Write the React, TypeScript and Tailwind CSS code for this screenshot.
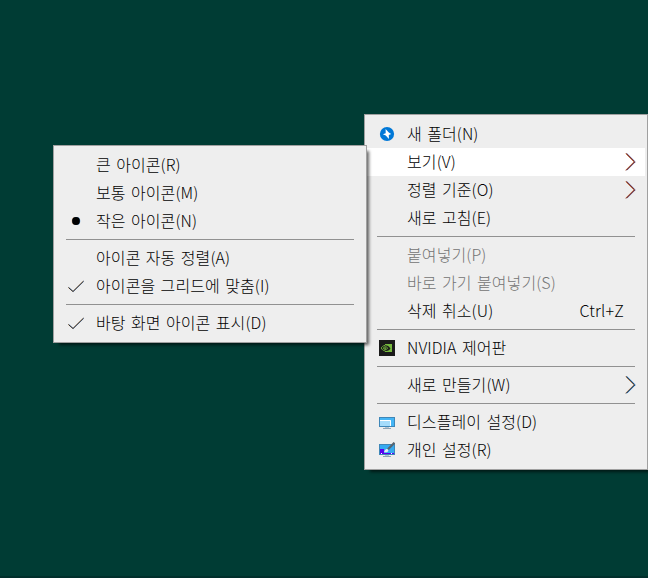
import React from "react";
import clsx from "clsx";

type MenuEntry =
  | { type: "separator" }
  | {
      type: "item";
      label: string;
      icon?: React.ReactNode;
      shortcut?: string;
      arrow?: "red" | "blue";
      active?: boolean;
      disabled?: boolean;
    };

const FolderIcon = () => (
  <svg width="16" height="16" viewBox="0 0 16 16">
    <circle cx="8" cy="8" r="7.1" fill="#0078d7" />
    <path d="M6.6 3 L9.8 6.4 L12.2 8 L9.8 9 L9.9 13 L6.8 9.4 L3.9 8.2 L6.7 7.2 Z" fill="#fff" />
  </svg>
);

const NvidiaIcon = () => (
  <svg width="16" height="16" viewBox="0 0 16 16">
    <rect width="16" height="16" fill="#1a1a1a" />
    <path d="M6 4h7v8H6v-1.2c3 .5 4.6-1 5.4-2.4C10 6.4 8.5 5.4 6 5.3Z" fill="#76b93e" />
    <path
      d="M6 5.4C4 5.7 2.6 7 2.2 8c.7 1.6 2 2.6 3.8 2.9M6 6.9c-1 .2-1.6.7-1.9 1.2.4.7 1 1.1 1.9 1.3M6 6.8c1.5-.1 2.2.6 2.8 1.3C8.2 9 7.3 9.6 6 9.4V7.8l1.2.7"
      fill="none"
      stroke="#76b93e"
      strokeWidth="0.9"
    />
  </svg>
);

const DisplayIcon = () => (
  <svg width="16" height="16" viewBox="0 0 16 16">
    <rect x="0.5" y="3.5" width="15" height="9" fill="#45b5f5" stroke="#3f87b8" />
    <path d="M1 6h11v6H1z" fill="#a5dcfb" />
    <path d="M1 6.500h10.500V12" fill="none" stroke="#fff" />
    <path d="M6 13h4v1H6z" fill="#b5c4cf" />
    <path d="M4 14h8v1H4z" fill="#8fa5b5" />
  </svg>
);

const PersonalizeIcon = () => (
  <svg width="16" height="16" viewBox="0 0 16 16">
    <rect x="0.5" y="2.5" width="15" height="10" fill="#35aaf0" stroke="#3f87b8" />
    <path d="M1 7h4v4h10v1H1z" fill="#5a00f0" />
    <path d="M2 11h1v1H2zM12 11h1v1h-1z" fill="#fff" />
    <path d="M6 13h4v1H6z" fill="#b5c4cf" />
    <path d="M4 14h8v1H4z" fill="#8fa5b5" />
    <path d="M9 7.200 L15.500 0.700" stroke="#59656f" strokeWidth="2.2" />
    <path d="M4.800 10c1-.3.800-2.500 2.500-3 1.500-.2 2.500 1 1.800 2.200C8.300 10.500 6.300 10.500 4.800 10Z" fill="#e9edf0" />
  </svg>
);

const CheckIcon = () => (
  <svg width="16" height="16" viewBox="0 0 16 16" fill="none">
    <path d="M0.200 9.500 L4.800 13.600 L15.200 3.200" stroke="#e9b27c" strokeWidth="0.9" />
    <path d="M0.900 9.500 L5.400 13.600 L16 3.200" stroke="#6a9fe0" strokeWidth="0.7" />
    <path d="M0.500 9.500 L5 13.500 L15.600 3.100" stroke="#111" strokeWidth="0.9" />
  </svg>
);

const BulletIcon = () => (
  <svg width="16" height="16" viewBox="0 0 16 16">
    <circle cx="7.7" cy="8" r="4" fill="#e9a060" />
    <circle cx="8.3" cy="8" r="4" fill="#5b9ee0" />
    <circle cx="8" cy="8" r="3.9" fill="#000" />
  </svg>
);

// subpixel-style fringes: warm on the left edge, cool on the right
const Chevron = ({ tone }: { tone: "red" | "blue" }) => (
  <svg width="11" height="18" viewBox="0 0 11 18" fill="none">
    <path d="M0.500 0.500 L8.900 8.900 L0.500 17.300" stroke="#e8a468" />
    <path d="M1.900 0.500 L10.300 8.900 L1.900 17.300" stroke={tone === "red" ? "#7d7fb0" : "#2f8be0"} />
    <path d="M1.200 0.500 L9.600 8.900 L1.200 17.300" stroke={tone === "red" ? "#5a0008" : "#001c38"} />
  </svg>
);

const desktopMenu: MenuEntry[] = [
  { type: "item", label: "새 폴더(N)", icon: <FolderIcon /> },
  { type: "item", label: "보기(V)", arrow: "red", active: true },
  { type: "item", label: "정렬 기준(O)", arrow: "red" },
  { type: "item", label: "새로 고침(E)" },
  { type: "separator" },
  { type: "item", label: "붙여넣기(P)", disabled: true },
  { type: "item", label: "바로 가기 붙여넣기(S)", disabled: true },
  { type: "item", label: "삭제 취소(U)", shortcut: "Ctrl+Z" },
  { type: "separator" },
  { type: "item", label: "NVIDIA 제어판", icon: <NvidiaIcon /> },
  { type: "separator" },
  { type: "item", label: "새로 만들기(W)", arrow: "blue" },
  { type: "separator" },
  { type: "item", label: "디스플레이 설정(D)", icon: <DisplayIcon /> },
  { type: "item", label: "개인 설정(R)", icon: <PersonalizeIcon /> },
];

const viewMenu: MenuEntry[] = [
  { type: "item", label: "큰 아이콘(R)" },
  { type: "item", label: "보통 아이콘(M)" },
  { type: "item", label: "작은 아이콘(N)", icon: <BulletIcon /> },
  { type: "separator" },
  { type: "item", label: "아이콘 자동 정렬(A)" },
  { type: "item", label: "아이콘을 그리드에 맞춤(I)", icon: <CheckIcon /> },
  { type: "separator" },
  { type: "item", label: "바탕 화면 아이콘 표시(D)", icon: <CheckIcon /> },
];

const ContextMenu = ({ entries, className }: { entries: MenuEntry[]; className?: string }) => (
  <div
    className={clsx(
      "absolute border border-[#a0a0a0] bg-[#eeeeee] px-[2px] py-[5px] shadow-[4px_4px_3px_-2px_rgba(0,0,0,0.6)]",
      className
    )}
  >
    {entries.map((entry, index) =>
      entry.type === "separator" ? (
        <div key={index} className="flex h-[9px] items-center px-[10px]">
          <div className="h-px w-full bg-[#919191]" />
        </div>
      ) : (
        <div
          key={index}
          className={clsx(
            "flex h-7 items-center pl-3",
            entry.active && "bg-white",
            entry.disabled ? "text-[#747474]" : "text-black"
          )}
        >
          <div className="w-7 shrink-0">{entry.icon}</div>
          <span className="grow pb-0.5 leading-[26px] tracking-[0.1px] whitespace-pre [word-spacing:1.7px]">
            {entry.label}
          </span>
          {entry.shortcut && (
            <span className="mr-[21px] pb-0.5 leading-[26px] tracking-[0.2px]">{entry.shortcut}</span>
          )}
          {entry.arrow && (
            <div className="mr-[9px]">
              <Chevron tone={entry.arrow} />
            </div>
          )}
        </div>
      )
    )}
  </div>
);

const App = () => {
  return (
    <div className="relative h-[578px] w-[648px] overflow-hidden border-b-2 border-[#002f2b] bg-[#003c34] font-['Noto_Sans_CJK_KR',sans-serif] text-[16px] font-light">
      <ContextMenu entries={desktopMenu} className="top-[114px] left-[364px] w-[284px]" />
      <ContextMenu entries={viewMenu} className="top-[145px] left-[53px] w-[314px]" />
    </div>
  );
};

export default App;
